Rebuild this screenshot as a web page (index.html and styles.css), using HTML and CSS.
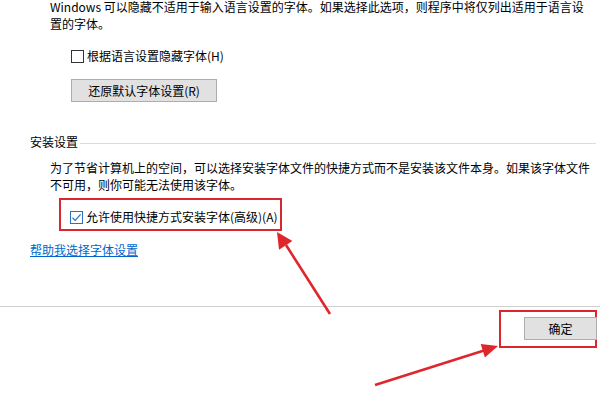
FILE: index.html
```html
<!DOCTYPE html>
<html>
<head>
<meta charset="utf-8">
<link rel="stylesheet" href="styles.css">
</head>
<body>
<div class="page">
  <div class="main">
    <p class="desc first">Windows 可以隐藏不适用于输入语言设置的字体。如果选择此选项，则程序中将仅列出适用于语言设<br>置的字体。</p>
    <label class="check-row hide-row"><span class="box"></span><span>根据语言设置隐藏字体(H)</span></label>
    <button class="btn restore">还原默认字体设置(R)</button>
    <div class="group-head"><span class="group-title">安装设置</span><span class="group-line"></span></div>
    <p class="desc">为了节省计算机上的空间，可以选择安装字体文件的快捷方式而不是安装该文件本身。如果该字体文件<br>不可用，则你可能无法使用该字体。</p>
    <div class="mark shortcut-mark">
      <label class="check-row"><span class="box checked"><svg viewBox="0 0 13 13" width="13" height="13"><path d="M2.5 6.8 L5.2 9.4 L10.6 3.4" fill="none" stroke="#2d6fc4" stroke-width="1.2"/></svg></span><span>允许使用快捷方式安装字体(高级)(A)</span></label>
    </div>
    <a class="help" href="#">帮助我选择字体设置</a>
  </div>
  <div class="footer">
    <div class="mark ok-mark"><button class="btn ok">确定</button></div>
  </div>
  <svg class="arrows" width="600" height="400" viewBox="0 0 600 400">
    <line x1="330" y1="314" x2="286" y2="245" stroke="#e0262d" stroke-width="2.6"/>
    <polygon points="277,232 292.4,241.1 279,249.7" fill="#e0262d"/>
    <line x1="375" y1="385" x2="484" y2="350.5" stroke="#e0262d" stroke-width="2.6"/>
    <polygon points="498,346 484.9,357.5 480.7,344.1" fill="#e0262d"/>
  </svg>
</div>
</body>
</html>
```

FILE: styles.css
```css
html, body {
  margin: 0;
  padding: 0;
  background: #ffffff;
}
body {
  font-family: "Noto Sans CJK SC", "Microsoft YaHei", sans-serif;
  font-size: 12px;
  line-height: 17px;
  color: #000;
  width: 600px;
  height: 400px;
  overflow: hidden;
}
.page {
  position: relative;
  width: 600px;
  height: 400px;
}
.main {
  padding-left: 30px;
  height: 306px;
  box-sizing: border-box;
  display: flex;
  flex-direction: column;
  align-items: flex-start;
}
.desc {
  margin: 9px 0 0 20px;
  white-space: nowrap;
}
.desc.first {
  margin-top: -2px;
}
.check-row {
  display: flex;
  align-items: center;
  height: 17px;
  white-space: nowrap;
}
.hide-row {
  margin: 15px 0 0 41px;
}
.box {
  width: 11px;
  height: 11px;
  border: 1px solid #333;
  background: #fff;
  margin-right: 3px;
  flex: none;
  position: relative;
  top: 1px;
}
.box.checked {
  border-color: #2d6fc4;
}
.box svg {
  position: absolute;
  left: -1px;
  top: -1px;
}
.btn {
  font-family: inherit;
  font-size: 12px;
  color: #000;
  background: #e1e1e1;
  border: 1px solid #adadad;
  padding: 0;
  height: 23px;
  box-sizing: border-box;
}
.restore {
  width: 146px;
  margin: 15px 0 0 41px;
}
.group-head {
  display: flex;
  align-items: center;
  width: 566px;
  margin-top: 31px;
}
.group-title {
  flex: none;
}
.group-line {
  flex: 1;
  height: 1px;
  background: #dcdcdc;
  margin-left: 2px;
  position: relative;
  top: 2px;
}
.mark {
  border: 2px solid #d9262f;
}
.shortcut-mark {
  margin: 5px 0 0 29px;
  width: 210px;
  padding: 8px 0 4px 9px;
}
.help {
  margin-top: 10px;
  color: #0066cc;
  text-decoration: underline;
}
.footer {
  border-top: 1px solid #d0d0d0;
  display: flex;
  justify-content: flex-end;
  padding: 3px 3px 0 0;
}
.ok-mark {
  width: 94px;
  box-sizing: content-box;
  padding: 5px 0 6px 0;
  display: flex;
  justify-content: flex-end;
}
.ok {
  width: 73px;
  height: 23px;
  margin-right: -2px;
}
.arrows {
  position: absolute;
  left: 0;
  top: 0;
  pointer-events: none;
}
```
